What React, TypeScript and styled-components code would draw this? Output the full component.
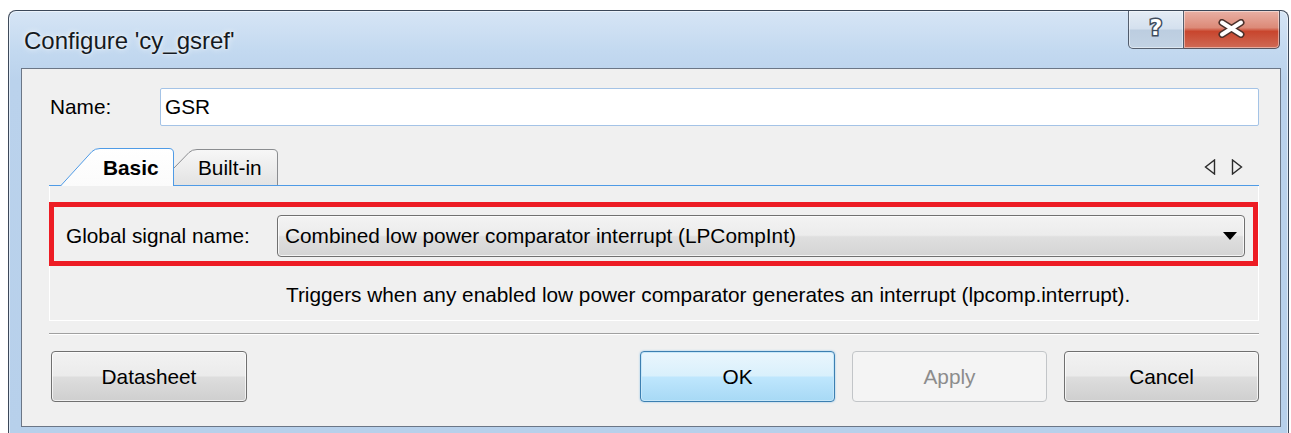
import styled, { createGlobalStyle } from 'styled-components';

const GlobalStyle = createGlobalStyle`
  html, body {
    margin: 0;
    padding: 0;
    background: #ffffff;
    overflow: hidden;
  }
  body {
    font-family: "Liberation Sans", Arial, sans-serif;
    color: #000;
  }
`;

const UI_FONT_SIZE = '20.8px';

const Desktop = styled.div`
  width: 1291px;
  height: 433px;
  padding: 10px 0 0 8px;
  box-sizing: border-box;
  overflow: hidden;
`;

const Window = styled.div`
  width: 1281px;
  box-sizing: border-box;
  border: 1px solid rgba(38, 48, 64, 0.85);
  border-radius: 8px 8px 0 0;
  padding: 0 7px 10px 12px;
  background: linear-gradient(180deg, #d6e5f5 0%, #c3d9f0 40px, #bad2ec 70px, #b7d0eb 100%);
  box-shadow: inset 0 0 0 1px rgba(255, 255, 255, 0.55);
`;

const TitleBar = styled.div`
  display: flex;
  align-items: flex-start;
  height: 57px;
`;

const Title = styled.div`
  padding: 16px 0 0 3px;
  font-size: 24px;
  line-height: 28px;
  color: #151a22;
  text-shadow: 0 0 6px rgba(255, 255, 255, 0.9), 0 0 2px rgba(255, 255, 255, 0.9);
`;

const CaptionButtons = styled.div`
  display: flex;
  margin-left: auto;
  margin-right: 1px;
`;

const CaptionButton = styled.div<{ $kind: 'help' | 'close' }>`
  display: flex;
  align-items: center;
  justify-content: center;
  height: 38px;
  box-sizing: border-box;
  border: 1px solid rgba(52, 62, 78, 0.8);
  border-top: none;
  box-shadow: inset 0 0 0 1px rgba(255, 255, 255, 0.45);
  ${({ $kind }) =>
    $kind === 'help'
      ? `
    width: 56px;
    border-radius: 0 0 0 5px;
    background: linear-gradient(180deg, #e4ecf5 0%, #d4e0ee 48%, #bccde0 52%, #c3d3e4 100%);
  `
      : `
    width: 96px;
    border-left: none;
    border-radius: 0 0 5px 0;
    background: linear-gradient(180deg, #e9b0a4 0%, #dc8a78 45%, #c8452d 55%, #cf6a55 100%);
  `}
`;

const HelpGlyph = styled.span`
  font-family: "DejaVu Sans", "Liberation Sans", sans-serif;
  font-size: 22px;
  font-weight: bold;
  line-height: 1;
  color: #ffffff;
  margin-top: -3px;
  -webkit-text-stroke: 3px #3e4b5c;
  paint-order: stroke fill;
`;

const Client = styled.div`
  display: flex;
  flex-direction: column;
  width: 1260px;
  height: 359px;
  box-sizing: border-box;
  border: 1px solid #6b7686;
  background: #f0f0f0;
  padding: 19px 21px 23px 27px;
  font-size: ${UI_FONT_SIZE};
`;

const NameRow = styled.div`
  display: flex;
  align-items: center;
  height: 38px;
`;

const FieldLabel = styled.label<{ $width: number }>`
  flex: none;
  width: ${({ $width }) => $width}px;
  padding-left: 1px;
  box-sizing: border-box;
  font-size: ${UI_FONT_SIZE};
`;

const TextInput = styled.div`
  flex: 1;
  height: 38px;
  box-sizing: border-box;
  border: 1px solid #a4c3e6;
  border-radius: 2px;
  background: #ffffff;
  padding-left: 4px;
  display: flex;
  align-items: center;
  font-size: ${UI_FONT_SIZE};
`;

const TabStrip = styled.div`
  display: flex;
  align-items: flex-end;
  height: 37px;
  margin-top: 22px;
  padding-left: 11px;
  border-bottom: 1px solid #4f9be6;
`;

const Tab = styled.div<{ $active?: boolean; $width: number }>`
  position: relative;
  flex: none;
  width: ${({ $width }) => $width}px;
  height: ${({ $active }) => ($active ? 38 : 36)}px;
  margin-bottom: ${({ $active }) => ($active ? -1 : 0)}px;
  margin-left: ${({ $active }) => ($active ? 0 : -17)}px;
  z-index: ${({ $active }) => ($active ? 2 : 1)};
  padding-left: ${({ $active }) => ($active ? 43 : 41)}px;
  padding-top: ${({ $active }) => ($active ? 2 : 1)}px;
  box-sizing: border-box;
  display: flex;
  align-items: center;
  font-size: ${UI_FONT_SIZE};
  font-weight: ${({ $active }) => ($active ? 'bold' : 'normal')};

  & > span {
    position: relative;
  }
`;

const TabShape = styled.svg`
  position: absolute;
  left: 0;
  top: 0;
`;

const TabScroller = styled.div`
  display: flex;
  gap: 15px;
  margin-left: auto;
  margin-right: 16px;
  align-self: center;
`;

const TabPage = styled.div`
  height: 135px;
  box-sizing: border-box;
  border: 1px solid #ffffff;
  border-top: none;
  padding-top: 16px;
  display: flex;
  flex-direction: column;
`;

const Highlight = styled.div`
  display: flex;
  align-items: center;
  height: 64px;
  margin-left: -1px;
  box-sizing: border-box;
  border: 5px solid #ed1c24;
  padding: 3px 8px 0 11px;
`;

const Dropdown = styled.div`
  flex: 1;
  height: 42px;
  box-sizing: border-box;
  display: flex;
  align-items: center;
  padding: 0 7px;
  border: 1px solid #707070;
  border-radius: 4px;
  background: linear-gradient(180deg, #f3f3f3 0%, #ececec 48%, #dfdfdf 52%, #d4d4d4 100%);
  box-shadow: inset 0 0 0 1px rgba(255, 255, 255, 0.75);
  font-size: ${UI_FONT_SIZE};
`;

const DropdownValue = styled.span`
  flex: 1;
`;

const Description = styled.div`
  margin-top: 17px;
  padding-left: 236px;
  line-height: 24px;
  font-size: ${UI_FONT_SIZE};
`;

const Separator = styled.div`
  margin-top: 12px;
  height: 1px;
  background: #a0a0a0;
  border-bottom: 1px solid #ffffff;
`;

const ButtonRow = styled.div`
  display: flex;
  gap: 17px;
  margin-top: 16px;
`;

const Spacer = styled.div`
  flex: 1;
`;

const Button = styled.button<{ $variant?: 'default' | 'primary' | 'disabled'; $width?: number; $offset?: number }>`
  width: ${({ $width }) => $width ?? 195}px;
  margin-left: ${({ $offset }) => $offset ?? 0}px;
  height: 51px;
  box-sizing: border-box;
  border-radius: 4px;
  font-family: "Liberation Sans", Arial, sans-serif;
  font-size: ${UI_FONT_SIZE};
  padding: 0;
  ${({ $variant }) =>
    $variant === 'primary'
      ? `
    border: 1px solid #3c7fb1;
    color: #000;
    background: linear-gradient(180deg, #eaf6fd 0%, #d9f0fc 48%, #bee6fd 52%, #a7d9f5 100%);
    box-shadow: inset 0 0 0 1px #c6e7f9, 0 0 2px rgba(60, 160, 230, 0.6);
  `
      : $variant === 'disabled'
        ? `
    border: 1px solid #c2c5c8;
    color: #8c8c8c;
    background: #f4f4f4;
  `
        : `
    border: 1px solid #707070;
    color: #000;
    background: linear-gradient(180deg, #f2f2f2 0%, #ebebeb 48%, #dddddd 52%, #cfcfcf 100%);
    box-shadow: inset 0 0 0 1px rgba(255, 255, 255, 0.7);
  `}
`;

// outline of a slanted property-sheet tab, open at the bottom
const tabPath = (w: number, h: number, slant: number) =>
  `M0.5,${h} L${slant - 4},3.5 Q${slant - 1},0.5 ${slant + 4},0.5 L${w - 5},0.5 Q${w - 0.5},0.5 ${
    w - 0.5
  },5 L${w - 0.5},${h}`;

const TabOutline = ({ w, h, active }: { w: number; h: number; active?: boolean }) => (
  <TabShape width={w} height={h} viewBox={`0 0 ${w} ${h}`}>
    <defs>
      <linearGradient id={active ? 'tabOn' : 'tabOff'} x1="0" y1="0" x2="0" y2="1">
        <stop offset="0" stopColor={active ? '#ffffff' : '#f7f7f7'} />
        <stop offset="1" stopColor={active ? '#fbfbfb' : '#e3e3e3'} />
      </linearGradient>
    </defs>
    <path
      d={tabPath(w, h, 36)}
      fill={`url(#${active ? 'tabOn' : 'tabOff'})`}
      stroke={active ? '#4f9be6' : '#8b8d90'}
      strokeWidth="1"
    />
  </TabShape>
);

const ArrowLeft = () => (
  <svg width="12" height="16" viewBox="0 0 12 16">
    <path d="M10.5,1 L10.5,15 L1.5,8 Z" fill="none" stroke="#2b2b2b" strokeWidth="1.4" />
  </svg>
);

const ArrowRight = () => (
  <svg width="12" height="16" viewBox="0 0 12 16">
    <path d="M1.5,1 L1.5,15 L10.5,8 Z" fill="none" stroke="#2b2b2b" strokeWidth="1.4" />
  </svg>
);

const CloseGlyph = () => (
  <svg width="29" height="19" viewBox="0 0 29 19" style={{ marginTop: -3 }}>
    <g strokeLinecap="round">
      <path d="M5,3.5 L24,15.5 M24,3.5 L5,15.5" stroke="#4a302b" strokeWidth="7" />
      <path d="M5,3.5 L24,15.5 M24,3.5 L5,15.5" stroke="#ffffff" strokeWidth="4" />
    </g>
  </svg>
);

const DropArrow = () => (
  <svg width="14" height="8" viewBox="0 0 14 8">
    <path d="M0,0 L14,0 L7,8 Z" fill="#000" />
  </svg>
);

export default function App() {
  return (
    <>
      <GlobalStyle />
      <Desktop>
        <Window>
          <TitleBar>
            <Title>Configure 'cy_gsref'</Title>
            <CaptionButtons>
              <CaptionButton $kind="help">
                <HelpGlyph>?</HelpGlyph>
              </CaptionButton>
              <CaptionButton $kind="close">
                <CloseGlyph />
              </CaptionButton>
            </CaptionButtons>
          </TitleBar>
          <Client>
            <NameRow>
              <FieldLabel $width={111}>Name:</FieldLabel>
              <TextInput>GSR</TextInput>
            </NameRow>

            <TabStrip>
              <Tab $active $width={114}>
                <TabOutline w={114} h={38} active />
                <span>Basic</span>
              </Tab>
              <Tab $width={121}>
                <TabOutline w={121} h={36} />
                <span>Built-in</span>
              </Tab>
              <TabScroller>
                <ArrowLeft />
                <ArrowRight />
              </TabScroller>
            </TabStrip>

            <TabPage>
              <Highlight>
                <FieldLabel $width={212}>Global signal name:</FieldLabel>
                <Dropdown>
                  <DropdownValue>Combined low power comparator interrupt (LPCompInt)</DropdownValue>
                  <DropArrow />
                </Dropdown>
              </Highlight>
              <Description>
                Triggers when any enabled low power comparator generates an interrupt (lpcomp.interrupt).
              </Description>
            </TabPage>

            <Separator />

            <ButtonRow>
              <Button $width={196} $offset={2}>
                Datasheet
              </Button>
              <Spacer />
              <Button $variant="primary">OK</Button>
              <Button $variant="disabled">Apply</Button>
              <Button>Cancel</Button>
            </ButtonRow>
          </Client>
        </Window>
      </Desktop>
    </>
  );
}
